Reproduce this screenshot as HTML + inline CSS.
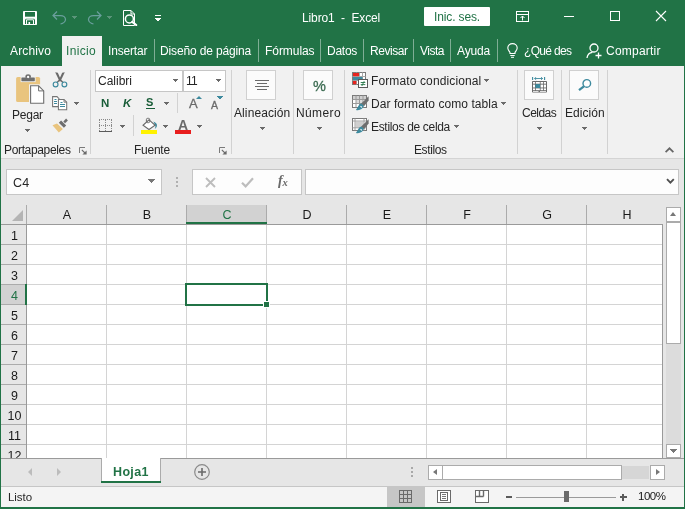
<!DOCTYPE html>
<html><head><meta charset="utf-8">
<style>
*{box-sizing:border-box;margin:0;padding:0}
html,body{width:685px;height:509px;overflow:hidden;background:#e6e6e6}
body{position:relative;font-family:"Liberation Sans",sans-serif;font-size:12px;color:#262626}
.a{position:absolute}
.t{position:absolute;white-space:nowrap;line-height:16px;will-change:transform}
.sep{position:absolute;width:1px;background:#d2d2d2;top:70px;height:84px}
.tsep{position:absolute;width:1px;background:#7fae95;top:39px;height:23px}
.arr{position:absolute;width:0;height:0;border-left:3px solid transparent;border-right:3px solid transparent;border-top:3px solid #6a6a6a}
.btn{position:absolute;width:30px;height:30px;background:#fbfbfb;border:1px solid #d0d0d0}
.gl{position:absolute;background:#d4d4d4}
</style></head><body>
<div class="a" style="left:0;top:0;width:685px;height:66px;background:#217346"></div>
<div class="a" style="left:1px;top:66px;width:683px;height:92px;background:#f1f1f1"></div>
<div class="a" style="left:1px;top:158px;width:683px;height:1px;background:#d4d4d4"></div>
<div class="a" style="left:62px;top:36px;width:40px;height:31px;background:#f1f1f1"></div>
<svg class="a" style="left:23px;top:11px" width="14" height="14" viewBox="0 0 14 14"><rect x="0" y="0" width="14" height="14" rx="0.8" fill="#fff"/><rect x="2" y="1" width="10" height="4.7" fill="#217346"/><path d="M2 8.7L2.8 7.7H11.2L12 8.7V13H2Z" fill="#217346"/><path d="M3.5 13V8.8H10.5V13" fill="none" stroke="#fff"/><rect x="5.5" y="11" width="1.6" height="2" fill="#fff"/></svg>
<svg class="a" style="left:52px;top:11px" width="15" height="14" viewBox="0 0 15 14"><path d="M5 0.5L1 4.5L5 8.5M1 4.5H8.5C11.5 4.5 13.5 6.5 13.5 8.5C13.5 10.5 11 12.5 8.5 13" fill="none" stroke="#6a9f9c" stroke-width="1.25"/></svg>
<svg class="a" style="left:87px;top:11px" width="15" height="14" viewBox="0 0 15 14"><path d="M10 0.5L14 4.5L10 8.5M14 4.5H6.5C3.5 4.5 1.5 6.5 1.5 8.5C1.5 10.5 4 12.5 6.5 13" fill="none" stroke="#6a9f9c" stroke-width="1.25"/></svg>
<svg class="a" style="left:122px;top:10px" width="16" height="16" viewBox="0 0 16 16"><path d="M1.5 0.5H9L12.5 4V15.5H1.5Z" fill="none" stroke="#fff"/><path d="M9 0.5V4H12.5" fill="none" stroke="#fff"/><circle cx="7.4" cy="8.9" r="4" fill="#217346" stroke="#fff" stroke-width="1.5"/><path d="M10.3 11.8L14.2 15" stroke="#fff" stroke-width="2.2" stroke-linecap="round"/></svg>
<div class="a" style="left:155px;top:15px;width:6px;height:1px;background:#fff"></div>
<div class="a" style="left:72px;top:16px;width:5px;height:1px;background:#5b957a"></div><div class="a" style="left:73px;top:17px;width:3px;height:1px;background:#5b957a"></div><div class="a" style="left:74px;top:18px;width:1px;height:1px;background:#5b957a"></div>
<div class="a" style="left:107px;top:16px;width:5px;height:1px;background:#5b957a"></div><div class="a" style="left:108px;top:17px;width:3px;height:1px;background:#5b957a"></div><div class="a" style="left:109px;top:18px;width:1px;height:1px;background:#5b957a"></div>
<div class="a" style="left:155px;top:18px;width:6px;height:1px;background:#fff"></div><div class="a" style="left:156px;top:19px;width:4px;height:1px;background:#fff"></div><div class="a" style="left:157px;top:20px;width:2px;height:1px;background:#fff"></div>
<div class="t" style="left:302.02px;top:10.24px;font-size:12px;letter-spacing:-0.118px;color:#ffffff;">Libro1&nbsp; -&nbsp; Excel</div>
<div class="a" style="left:424px;top:7px;width:66px;height:19px;background:#fff;border-radius:1px"></div>
<div class="t" style="left:433.91px;top:8.84px;font-size:12px;letter-spacing:-0.130px;color:#217346;">Inic. ses.</div>
<svg class="a" style="left:516px;top:11px" width="13" height="11" viewBox="0 0 13 11"><rect x="0.5" y="0.5" width="12" height="10" fill="none" stroke="#fff"/><path d="M0.5 3.5H12.5" stroke="#fff"/><path d="M6.5 9.5V5M4.5 7L6.5 5L8.5 7" fill="none" stroke="#fff"/></svg>
<div class="a" style="left:564px;top:16px;width:10px;height:1px;background:#fff"></div>
<div class="a" style="left:610px;top:11px;width:10px;height:10px;border:1px solid #fff"></div>
<svg class="a" style="left:655px;top:10px" width="12" height="12" viewBox="0 0 12 12"><path d="M1 1L11 11M11 1L1 11" stroke="#fff" stroke-width="1.1"/></svg>

<div class="t" style="left:9.98px;top:42.64px;font-size:12px;letter-spacing:0.133px;color:#ffffff;">Archivo</div>
<div class="t" style="left:66.21px;top:42.64px;font-size:12px;letter-spacing:0.356px;color:#217346;">Inicio</div>
<div class="t" style="left:108.41px;top:42.64px;font-size:12px;letter-spacing:-0.170px;color:#ffffff;">Insertar</div>
<div class="t" style="left:160.32px;top:42.64px;font-size:12px;letter-spacing:-0.149px;color:#ffffff;">Diseño de página</div>
<div class="t" style="left:264.52px;top:42.64px;font-size:12px;letter-spacing:-0.058px;color:#ffffff;">Fórmulas</div>
<div class="t" style="left:326.52px;top:42.64px;font-size:12px;letter-spacing:-0.259px;color:#ffffff;">Datos</div>
<div class="t" style="left:369.62px;top:42.64px;font-size:12px;letter-spacing:-0.433px;color:#ffffff;">Revisar</div>
<div class="t" style="left:419.95px;top:42.64px;font-size:12px;letter-spacing:-0.505px;color:#ffffff;">Vista</div>
<div class="t" style="left:456.98px;top:42.64px;font-size:12px;letter-spacing:-0.128px;color:#ffffff;">Ayuda</div>
<div class="t" style="left:524.23px;top:42.64px;font-size:12px;letter-spacing:-0.686px;color:#ffffff;">¿Qué des</div>
<div class="t" style="left:605.89px;top:42.64px;font-size:12px;letter-spacing:0.228px;color:#ffffff;">Compartir</div>
<div class="tsep" style="left:154px"></div>
<div class="tsep" style="left:258px"></div>
<div class="tsep" style="left:320px"></div>
<div class="tsep" style="left:363px"></div>
<div class="tsep" style="left:413px"></div>
<div class="tsep" style="left:450px"></div>
<div class="tsep" style="left:497px"></div>
<svg class="a" style="left:507px;top:43px" width="11" height="15" viewBox="0 0 11 15"><path d="M5.5 0.6C2.8 0.6 0.8 2.6 0.8 5C0.8 7 2.3 8 3 9.5V10.5H8V9.5C8.7 8 10.2 7 10.2 5C10.2 2.6 8.2 0.6 5.5 0.6Z" fill="none" stroke="#fff" stroke-width="1.1"/><path d="M3.3 12.5H7.7M4 14.3H7" stroke="#fff"/></svg>
<svg class="a" style="left:586px;top:43px" width="17" height="16" viewBox="0 0 17 16"><circle cx="8" cy="5" r="4" fill="none" stroke="#fff" stroke-width="1.3"/><path d="M1 15C1.5 11 4 9.5 6.5 9.3" fill="none" stroke="#fff" stroke-width="1.3"/><path d="M12.5 9.5V15.5M9.5 12.5H15.5" stroke="#fff" stroke-width="1.3"/></svg>

<div class="sep" style="left:90px"></div>
<div class="sep" style="left:231px"></div>
<div class="sep" style="left:293px"></div>
<div class="sep" style="left:344px"></div>
<div class="sep" style="left:517px"></div>
<div class="sep" style="left:561px"></div>
<div class="sep" style="left:607px"></div>
<svg class="a" style="left:16px;top:74px" width="29" height="31" viewBox="0 0 29 31">
<rect x="0.1" y="2.9" width="24" height="25.1" rx="1.6" fill="#e9c47e"/>
<rect x="4.6" y="2.9" width="15" height="5.2" fill="#f1f1f1"/>
<rect x="5.4" y="3.6" width="13.4" height="3.6" rx="0.4" fill="#6e6e6e"/>
<path d="M9.4 3.8V2.6C9.4 1.1 10.4 0.3 12.1 0.3C13.8 0.3 14.9 1.1 14.9 2.6V3.8Z" fill="#6e6e6e"/><circle cx="12.1" cy="3" r="1.15" fill="#fff"/>
<rect x="13" y="10.3" width="16" height="20.7" fill="#f1f1f1"/>
<path d="M14.6 11.8H22.6L27.7 16.9V29.3H14.6Z" fill="#fff" stroke="#6e6e6e" stroke-width="1.1"/><path d="M22.6 11.8V16.9H27.7" fill="none" stroke="#6e6e6e" stroke-width="1"/>
</svg>
<svg class="a" style="left:52px;top:72px" width="16" height="16" viewBox="0 0 16 16">
<path d="M3.2 0.3L5.8 0.8L9.3 8.6L7.6 9.4Z" fill="#6a6a6a"/><path d="M12.8 0.3L10.2 0.8L6.7 8.6L8.4 9.4Z" fill="#6a6a6a"/>
<path d="M7.6 8L5 10.6M8.4 8L11 10.6" stroke="#6a6a6a" stroke-width="1.4"/>
<circle cx="3.6" cy="12.4" r="2.4" fill="none" stroke="#3d8a9e" stroke-width="1.15"/><circle cx="12.4" cy="12.4" r="2.4" fill="none" stroke="#3d8a9e" stroke-width="1.15"/>
</svg>
<svg class="a" style="left:52px;top:96px" width="16" height="15" viewBox="0 0 16 15">
<path d="M0.6 0.6H5L7 2.6V10.6H0.6Z" fill="#fff" stroke="#757575" stroke-width="1.05"/>
<path d="M6.4 3.5H12L14.7 6.2V13.7H6.4Z" fill="#fff" stroke="#757575" stroke-width="1.05"/><path d="M12 3.5V6.2H14.7" fill="none" stroke="#757575" stroke-width="0.9"/>
<path d="M2.5 3.5H4.5M2 5.5H5M2 7.5H5M8.5 6.5H10.5M8 8.5H13M8 10.5H13" stroke="#3d8a9e" stroke-width="1" fill="none"/>
</svg>
<svg class="a" style="left:52px;top:118px" width="18" height="16" viewBox="0 0 18 16">
<path d="M0.5 7.3L5 5.6L10.9 11.1L6.8 14.6Z" fill="#e9c47e"/>
<path d="M14.2 7.5L11.9 9.8L6.8 4.7L9.1 2.4Z" fill="#6e6e6e"/>
<path d="M15.9 2.4L14.1 0.6L11.3 3.4L13.1 5.2Z" fill="#6e6e6e"/>
</svg>
<div class="t" style="left:12.42px;top:106.84px;font-size:12px;letter-spacing:-0.236px;color:#262626;">Pegar</div>
<div class="a" style="left:25px;top:129px;width:5px;height:1px;background:#6a6a6a"></div><div class="a" style="left:26px;top:130px;width:3px;height:1px;background:#6a6a6a"></div><div class="a" style="left:27px;top:131px;width:1px;height:1px;background:#6a6a6a"></div>
<div class="a" style="left:74px;top:102px;width:5px;height:1px;background:#6a6a6a"></div><div class="a" style="left:75px;top:103px;width:3px;height:1px;background:#6a6a6a"></div><div class="a" style="left:76px;top:104px;width:1px;height:1px;background:#6a6a6a"></div>
<div class="t" style="left:3.72px;top:141.84px;font-size:12px;letter-spacing:-0.347px;color:#262626;">Portapapeles</div>
<svg class="a" style="left:79px;top:147px" width="8" height="8" viewBox="0 0 8 8"><path d="M0.5 6V0.5H6" fill="none" stroke="#7a7a7a"/><path d="M2.8 2.8L6 6" stroke="#6a6a6a" stroke-width="1.1"/><path d="M7.6 3.4V7.6H3.4Z" fill="#6a6a6a"/></svg>
<div class="a" style="left:95px;top:70px;width:88px;height:22px;background:#fff;border:1px solid #c6c6c6"></div>
<div class="a" style="left:183px;top:70px;width:43px;height:22px;background:#fff;border:1px solid #c6c6c6"></div>
<div class="t" style="left:98.19px;top:72.84px;font-size:12px;letter-spacing:0.001px;color:#262626;">Calibri</div>
<div class="t" style="left:185.69px;top:72.84px;font-size:12px;letter-spacing:-0.669px;color:#262626;">11</div>
<div class="a" style="left:173px;top:79px;width:5px;height:1px;background:#6a6a6a"></div><div class="a" style="left:174px;top:80px;width:3px;height:1px;background:#6a6a6a"></div><div class="a" style="left:175px;top:81px;width:1px;height:1px;background:#6a6a6a"></div>
<div class="a" style="left:216px;top:79px;width:5px;height:1px;background:#6a6a6a"></div><div class="a" style="left:217px;top:80px;width:3px;height:1px;background:#6a6a6a"></div><div class="a" style="left:218px;top:81px;width:1px;height:1px;background:#6a6a6a"></div>
<div class="t" style="left:101.23px;top:94.82px;font-size:11.5px;letter-spacing:1.334px;color:#185c37;font-weight:bold;">N</div>
<div class="t" style="left:123.11px;top:94.82px;font-size:11.5px;letter-spacing:-0.513px;color:#185c37;font-weight:bold;font-style:italic;">K</div>
<div class="t" style="left:146.49px;top:94.49px;font-size:11px;letter-spacing:0.491px;color:#185c37;font-weight:bold;">S</div>
<div class="a" style="left:146px;top:108px;width:9px;height:1px;background:#185c37"></div>
<div class="a" style="left:164px;top:102px;width:5px;height:1px;background:#6a6a6a"></div><div class="a" style="left:165px;top:103px;width:3px;height:1px;background:#6a6a6a"></div><div class="a" style="left:166px;top:104px;width:1px;height:1px;background:#6a6a6a"></div>
<div class="a" style="left:177px;top:93px;width:1px;height:20px;background:#d2d2d2"></div>
<div class="t" style="left:188.78px;top:96.10px;font-size:13px;letter-spacing:0.259px;color:#6a6a6a;-webkit-text-stroke:0.3px #6a6a6a;">A</div>
<div class="a" style="left:195.5px;top:96px;width:0;height:0;border-left:3px solid transparent;border-right:3px solid transparent;border-bottom:3.5px solid #3d8a9e"></div>
<div class="t" style="left:211.38px;top:96.96px;font-size:10.5px;letter-spacing:0.431px;color:#6a6a6a;-webkit-text-stroke:0.3px #6a6a6a;">A</div>
<div class="a" style="left:217px;top:96px;width:6px;height:1px;background:#3d8a9e"></div><div class="a" style="left:218px;top:97px;width:4px;height:1px;background:#3d8a9e"></div><div class="a" style="left:219px;top:98px;width:2px;height:1px;background:#3d8a9e"></div>
<div class="a" style="left:99px;top:119px;width:13px;height:12px;background:
repeating-linear-gradient(90deg,#8a8a8a 0 1px,transparent 1px 2px) 0 0/13px 1px no-repeat,
repeating-linear-gradient(90deg,#8a8a8a 0 1px,transparent 1px 2px) 0 6px/13px 1px no-repeat,
repeating-linear-gradient(0deg,#8a8a8a 0 1px,transparent 1px 2px) 0 0/1px 12px no-repeat,
repeating-linear-gradient(0deg,#8a8a8a 0 1px,transparent 1px 2px) 6px 0/1px 12px no-repeat,
repeating-linear-gradient(0deg,#8a8a8a 0 1px,transparent 1px 2px) 12px 0/1px 12px no-repeat"></div><div class="a" style="left:99px;top:131px;width:13px;height:1px;background:#5a5a5a"></div>
<div class="a" style="left:120px;top:125px;width:5px;height:1px;background:#6a6a6a"></div><div class="a" style="left:121px;top:126px;width:3px;height:1px;background:#6a6a6a"></div><div class="a" style="left:122px;top:127px;width:1px;height:1px;background:#6a6a6a"></div>
<div class="a" style="left:133px;top:115px;width:1px;height:21px;background:#d2d2d2"></div>
<svg class="a" style="left:141px;top:117px" width="17" height="17" viewBox="0 0 17 17">
<path d="M12.4 4.6Q16.6 6.4 15.9 9.2Q15.4 11 13.8 12Q14.9 9.8 14.2 8.3Z" fill="#3d8a9e"/>
<path d="M8.1 2.8L14.1 8.3L8 12.5L2 8.3Z" fill="#fff" stroke="#6a6a6a" stroke-width="1.05"/><rect x="5.4" y="1.3" width="3.3" height="4.4" rx="1.3" fill="none" stroke="#6a6a6a" stroke-width="1"/>
<rect x="0" y="13" width="16" height="4" fill="#fff200"/></svg>
<div class="a" style="left:163px;top:125px;width:5px;height:1px;background:#6a6a6a"></div><div class="a" style="left:164px;top:126px;width:3px;height:1px;background:#6a6a6a"></div><div class="a" style="left:165px;top:127px;width:1px;height:1px;background:#6a6a6a"></div>
<div class="t" style="left:178.26px;top:117.45px;font-size:14px;letter-spacing:-0.006px;color:#6a6a6a;font-weight:bold;">A</div>
<div class="a" style="left:175px;top:130px;width:16px;height:4px;background:#e81e1e"></div>
<div class="a" style="left:197px;top:125px;width:5px;height:1px;background:#6a6a6a"></div><div class="a" style="left:198px;top:126px;width:3px;height:1px;background:#6a6a6a"></div><div class="a" style="left:199px;top:127px;width:1px;height:1px;background:#6a6a6a"></div>
<div class="t" style="left:133.62px;top:141.84px;font-size:12px;letter-spacing:-0.249px;color:#262626;">Fuente</div>
<svg class="a" style="left:219px;top:147px" width="8" height="8" viewBox="0 0 8 8"><path d="M0.5 6V0.5H6" fill="none" stroke="#7a7a7a"/><path d="M2.8 2.8L6 6" stroke="#6a6a6a" stroke-width="1.1"/><path d="M7.6 3.4V7.6H3.4Z" fill="#6a6a6a"/></svg>
<div class="btn" style="left:246px;top:70px"></div>
<div class="a" style="left:255px;top:80px;width:14px;height:1px;background:#6a6a6a;box-shadow:0 6px 0 #6a6a6a"></div><div class="a" style="left:257px;top:83px;width:10px;height:1px;background:#6a6a6a;box-shadow:0 6px 0 #6a6a6a"></div>
<div class="t" style="left:233.98px;top:104.84px;font-size:12px;letter-spacing:0.101px;color:#262626;">Alineación</div>
<div class="a" style="left:260px;top:127px;width:5px;height:1px;background:#6a6a6a"></div><div class="a" style="left:261px;top:128px;width:3px;height:1px;background:#6a6a6a"></div><div class="a" style="left:262px;top:129px;width:1px;height:1px;background:#6a6a6a"></div>
<div class="btn" style="left:303px;top:70px"></div>
<div class="t" style="left:313.18px;top:77.98px;font-size:14.5px;letter-spacing:0.225px;color:#3a6a50;-webkit-text-stroke:0.3px #3a6a50;">%</div>
<div class="t" style="left:296.42px;top:104.84px;font-size:12px;letter-spacing:0.383px;color:#262626;">Número</div>
<div class="a" style="left:317px;top:127px;width:5px;height:1px;background:#6a6a6a"></div><div class="a" style="left:318px;top:128px;width:3px;height:1px;background:#6a6a6a"></div><div class="a" style="left:319px;top:129px;width:1px;height:1px;background:#6a6a6a"></div>
<svg class="a" style="left:352px;top:72px" width="16" height="16" viewBox="0 0 16 16">
<rect x="0.5" y="0.5" width="13" height="12" fill="#fff" stroke="#7a7a7a"/><path d="M0.5 4.5H13.5M0.5 8.5H13.5M4.5 0.5V12.5M7.5 0.5V4.5M10.5 0.5V8" stroke="#a8a8a8"/>
<rect x="1" y="1" width="6" height="3.2" fill="#e8231e"/><rect x="1" y="5" width="9.5" height="3.2" fill="#3d8a9e"/><rect x="1" y="9" width="3.3" height="3.2" fill="#e8231e"/>
<rect x="6.5" y="7.5" width="9" height="8" fill="#fff" stroke="#5a5a5a"/><path d="M8.7 10.5H13.3M8.7 12.6H13.3M12.2 9.2L9.8 14" stroke="#2c7a4e" stroke-width="0.95"/></svg>
<svg class="a" style="left:352px;top:95px" width="17" height="17" viewBox="0 0 17 17">
<rect x="0.5" y="0.5" width="14" height="12" fill="#fff" stroke="#7a7a7a"/><rect x="1" y="1" width="13" height="3.4" fill="#cfcfcf"/><rect x="4" y="4.8" width="7" height="3.6" fill="#dcdcdc"/><path d="M0.5 4.5H14.5M0.5 8.5H14.5M4 0.5V12.5M7.5 0.5V12.5M11 0.5V12.5" stroke="#9a9a9a"/>
<path d="M16.6 1.2L16.6 5.6L12 11.2L9 8.8Z" fill="#6e6e6e"/><path d="M9.2 8.6C6.6 9.3 6.3 12 3.9 14.9C7.2 15.9 10.8 14.4 11.8 10.8Z" fill="#3d8a9e"/><path d="M8.5 11.3L10 12.4" stroke="#fff" stroke-width="1.1"/></svg>
<svg class="a" style="left:352px;top:118px" width="17" height="17" viewBox="0 0 17 17">
<rect x="0.5" y="0.5" width="14" height="12" fill="#fff" stroke="#7a7a7a"/><rect x="3.5" y="3.5" width="8" height="6" fill="#cfcfcf"/><path d="M0.5 3H14.5M0.5 9.8H14.5M3 0.5V12.5M12 0.5V12.5" stroke="#9a9a9a" stroke-width="0.9"/>
<path d="M16.6 1.2L16.6 5.6L12 11.2L9 8.8Z" fill="#6e6e6e"/><path d="M9.2 8.6C6.6 9.3 6.3 12 3.9 14.9C7.2 15.9 10.8 14.4 11.8 10.8Z" fill="#3d8a9e"/><path d="M8.5 11.3L10 12.4" stroke="#fff" stroke-width="1.1"/></svg>
<div class="t" style="left:370.72px;top:72.84px;font-size:12px;letter-spacing:0.123px;color:#262626;">Formato condicional</div>
<div class="a" style="left:484px;top:79px;width:5px;height:1px;background:#6a6a6a"></div><div class="a" style="left:485px;top:80px;width:3px;height:1px;background:#6a6a6a"></div><div class="a" style="left:486px;top:81px;width:1px;height:1px;background:#6a6a6a"></div>
<div class="t" style="left:370.72px;top:96.04px;font-size:12px;letter-spacing:0.061px;color:#262626;">Dar formato como tabla</div>
<div class="a" style="left:501px;top:102px;width:5px;height:1px;background:#6a6a6a"></div><div class="a" style="left:502px;top:103px;width:3px;height:1px;background:#6a6a6a"></div><div class="a" style="left:503px;top:104px;width:1px;height:1px;background:#6a6a6a"></div>
<div class="t" style="left:370.72px;top:119.24px;font-size:12px;letter-spacing:-0.319px;color:#262626;">Estilos de celda</div>
<div class="a" style="left:454px;top:125px;width:5px;height:1px;background:#6a6a6a"></div><div class="a" style="left:455px;top:126px;width:3px;height:1px;background:#6a6a6a"></div><div class="a" style="left:456px;top:127px;width:1px;height:1px;background:#6a6a6a"></div>
<div class="t" style="left:413.72px;top:141.84px;font-size:12px;letter-spacing:-0.390px;color:#262626;">Estilos</div>
<div class="btn" style="left:524px;top:70px"></div>
<svg class="a" style="left:532px;top:77px" width="15" height="16" viewBox="0 0 15 16">
<path d="M0.6 0V3M12.6 0V3" stroke="#3d8a9e" stroke-width="1.1"/><path d="M2.6 1.5H10.6M4.2 0.2L2.6 1.5L4.2 2.8M9 0.2L10.6 1.5L9 2.8" stroke="#3d8a9e" fill="none" stroke-width="0.9"/>
<rect x="0" y="4" width="15" height="11.6" rx="0.8" fill="#6a6a6a"/>
<g fill="#fff"><rect x="1" y="5" width="2" height="1.7"/><rect x="3.8" y="5" width="4" height="1.7"/><rect x="8.6" y="5" width="2.6" height="1.7"/><rect x="12" y="5" width="2" height="1.7"/>
<rect x="1" y="7.6" width="2" height="2.9"/><rect x="8.6" y="7.6" width="2.6" height="2.9"/><rect x="12" y="7.6" width="2" height="2.9"/>
<rect x="1" y="11.4" width="2" height="1.8"/><rect x="3.8" y="11.4" width="4" height="1.8"/><rect x="8.6" y="11.4" width="2.6" height="1.8"/><rect x="12" y="11.4" width="2" height="1.8"/>
<rect x="1" y="14.1" width="5.5" height="0.8"/><rect x="8" y="14.1" width="6" height="0.8"/></g>
<rect x="3.4" y="7.1" width="4.7" height="3.9" fill="#3d8a9e"/></svg>
<div class="t" style="left:522.19px;top:104.84px;font-size:12px;letter-spacing:-0.526px;color:#262626;">Celdas</div>
<div class="a" style="left:537px;top:127px;width:5px;height:1px;background:#6a6a6a"></div><div class="a" style="left:538px;top:128px;width:3px;height:1px;background:#6a6a6a"></div><div class="a" style="left:539px;top:129px;width:1px;height:1px;background:#6a6a6a"></div>
<div class="btn" style="left:569px;top:70px"></div>
<svg class="a" style="left:577px;top:78px" width="15" height="15" viewBox="0 0 15 15"><circle cx="9.8" cy="5.4" r="3.8" fill="#fff" stroke="#3d8a9e" stroke-width="1.4"/><path d="M6.9 8.3L2 12.2" stroke="#3d8a9e" stroke-width="2.2" stroke-linecap="butt"/></svg>
<div class="t" style="left:564.72px;top:104.84px;font-size:12px;letter-spacing:0.032px;color:#262626;">Edición</div>
<div class="a" style="left:582px;top:127px;width:5px;height:1px;background:#6a6a6a"></div><div class="a" style="left:583px;top:128px;width:3px;height:1px;background:#6a6a6a"></div><div class="a" style="left:584px;top:129px;width:1px;height:1px;background:#6a6a6a"></div>
<svg class="a" style="left:664px;top:146px" width="11" height="8" viewBox="0 0 11 8"><path d="M1.6 6.2L5.5 2.3L9.4 6.2" fill="none" stroke="#666" stroke-width="1.7"/></svg>

<div class="a" style="left:6px;top:169px;width:156px;height:26px;background:#fdfdfd;border:1px solid #c6c6c6"></div>
<div class="t" style="left:12.68px;top:174.67px;font-size:12.5px;letter-spacing:0.100px;color:#262626;">C4</div>
<div class="a" style="left:148px;top:179px;width:7px;height:1px;background:#777"></div><div class="a" style="left:149px;top:180px;width:5px;height:1px;background:#777"></div><div class="a" style="left:150px;top:181px;width:3px;height:1px;background:#777"></div><div class="a" style="left:151px;top:182px;width:1px;height:1px;background:#777"></div>
<div class="a" style="left:176px;top:177px;width:2px;height:2px;background:#b0b0b0;box-shadow:0 4px 0 #b0b0b0,0 8px 0 #b0b0b0"></div>
<div class="a" style="left:192px;top:169px;width:110px;height:26px;background:#fdfdfd;border:1px solid #c6c6c6"></div>
<svg class="a" style="left:205px;top:177px" width="11" height="11" viewBox="0 0 11 11"><path d="M1 1L10 10M10 1L1 10" stroke="#bdbdbd" stroke-width="1.9"/></svg>
<svg class="a" style="left:241px;top:177px" width="13" height="11" viewBox="0 0 13 11"><path d="M1 5.8L4.6 9.4L12 1.2" stroke="#bdbdbd" stroke-width="2.2" fill="none"/></svg>
<div class="t" style="left:277.5px;top:173px;font-family:'Liberation Serif',serif;font-style:italic;font-weight:bold;font-size:14px;color:#6a6a6a;letter-spacing:-0.3px">f<span style="font-size:10.5px;position:relative;top:1px">x</span></div>
<div class="a" style="left:305px;top:169px;width:374px;height:26px;background:#fdfdfd;border:1px solid #c6c6c6"></div>
<svg class="a" style="left:666px;top:178px" width="9" height="7" viewBox="0 0 9 7"><path d="M1 1.2L4.4 4.6L7.8 1.2" fill="none" stroke="#505050" stroke-width="1.9"/></svg>

<div class="a" style="left:27px;top:225px;width:635px;height:233px;background:#fff"></div>
<div class="a" style="left:187px;top:205px;width:80px;height:19px;background:#d2d2d2"></div>
<div class="a" style="left:1px;top:285px;width:25px;height:19px;background:#d2d2d2"></div>
<div class="a" style="left:26px;top:205px;width:1px;height:19px;background:#ababab"></div>
<div class="a" style="left:106px;top:205px;width:1px;height:19px;background:#ababab"></div>
<div class="a" style="left:186px;top:205px;width:1px;height:19px;background:#ababab"></div>
<div class="a" style="left:266px;top:205px;width:1px;height:19px;background:#ababab"></div>
<div class="a" style="left:346px;top:205px;width:1px;height:19px;background:#ababab"></div>
<div class="a" style="left:426px;top:205px;width:1px;height:19px;background:#ababab"></div>
<div class="a" style="left:506px;top:205px;width:1px;height:19px;background:#ababab"></div>
<div class="a" style="left:586px;top:205px;width:1px;height:19px;background:#ababab"></div>
<div class="gl" style="left:106px;top:225px;width:1px;height:233px"></div>
<div class="gl" style="left:186px;top:225px;width:1px;height:233px"></div>
<div class="gl" style="left:266px;top:225px;width:1px;height:233px"></div>
<div class="gl" style="left:346px;top:225px;width:1px;height:233px"></div>
<div class="gl" style="left:426px;top:225px;width:1px;height:233px"></div>
<div class="gl" style="left:506px;top:225px;width:1px;height:233px"></div>
<div class="gl" style="left:586px;top:225px;width:1px;height:233px"></div>
<div class="gl" style="left:27px;top:244px;width:635px;height:1px"></div>
<div class="a" style="left:1px;top:244px;width:25px;height:1px;background:#ababab"></div>
<div class="gl" style="left:27px;top:264px;width:635px;height:1px"></div>
<div class="a" style="left:1px;top:264px;width:25px;height:1px;background:#ababab"></div>
<div class="gl" style="left:27px;top:284px;width:635px;height:1px"></div>
<div class="a" style="left:1px;top:284px;width:25px;height:1px;background:#ababab"></div>
<div class="gl" style="left:27px;top:304px;width:635px;height:1px"></div>
<div class="a" style="left:1px;top:304px;width:25px;height:1px;background:#ababab"></div>
<div class="gl" style="left:27px;top:324px;width:635px;height:1px"></div>
<div class="a" style="left:1px;top:324px;width:25px;height:1px;background:#ababab"></div>
<div class="gl" style="left:27px;top:344px;width:635px;height:1px"></div>
<div class="a" style="left:1px;top:344px;width:25px;height:1px;background:#ababab"></div>
<div class="gl" style="left:27px;top:364px;width:635px;height:1px"></div>
<div class="a" style="left:1px;top:364px;width:25px;height:1px;background:#ababab"></div>
<div class="gl" style="left:27px;top:384px;width:635px;height:1px"></div>
<div class="a" style="left:1px;top:384px;width:25px;height:1px;background:#ababab"></div>
<div class="gl" style="left:27px;top:404px;width:635px;height:1px"></div>
<div class="a" style="left:1px;top:404px;width:25px;height:1px;background:#ababab"></div>
<div class="gl" style="left:27px;top:424px;width:635px;height:1px"></div>
<div class="a" style="left:1px;top:424px;width:25px;height:1px;background:#ababab"></div>
<div class="gl" style="left:27px;top:444px;width:635px;height:1px"></div>
<div class="a" style="left:1px;top:444px;width:25px;height:1px;background:#ababab"></div>
<div class="a" style="left:1px;top:224px;width:662px;height:1px;background:#9a9a9a"></div>
<div class="a" style="left:26px;top:224px;width:1px;height:234px;background:#9a9a9a"></div>
<div class="a" style="left:662px;top:224px;width:1px;height:235px;background:#9a9a9a"></div>
<div class="a" style="left:12px;top:210px;width:0;height:0;border-left:11px solid transparent;border-bottom:11px solid #b4b4b4"></div>
<div class="t" style="left:46.5px;width:40px;text-align:center;top:206.5px;font-size:12.5px;color:#1a1a1a">A</div>
<div class="t" style="left:126.5px;width:40px;text-align:center;top:206.5px;font-size:12.5px;color:#1a1a1a">B</div>
<div class="t" style="left:206.5px;width:40px;text-align:center;top:206.5px;font-size:12.5px;color:#217346">C</div>
<div class="t" style="left:286.5px;width:40px;text-align:center;top:206.5px;font-size:12.5px;color:#1a1a1a">D</div>
<div class="t" style="left:366.5px;width:40px;text-align:center;top:206.5px;font-size:12.5px;color:#1a1a1a">E</div>
<div class="t" style="left:446.5px;width:40px;text-align:center;top:206.5px;font-size:12.5px;color:#1a1a1a">F</div>
<div class="t" style="left:526.5px;width:40px;text-align:center;top:206.5px;font-size:12.5px;color:#1a1a1a">G</div>
<div class="t" style="left:606.5px;width:40px;text-align:center;top:206.5px;font-size:12.5px;color:#1a1a1a">H</div>
<div class="a" style="left:1px;top:224px;width:25px;height:234px;overflow:hidden"><div class="t" style="left:0.6px;width:25px;text-align:center;top:3.5px;font-size:12.5px;color:#1a1a1a">1</div>
<div class="t" style="left:0.6px;width:25px;text-align:center;top:23.5px;font-size:12.5px;color:#1a1a1a">2</div>
<div class="t" style="left:0.6px;width:25px;text-align:center;top:43.5px;font-size:12.5px;color:#1a1a1a">3</div>
<div class="t" style="left:0.6px;width:25px;text-align:center;top:63.5px;font-size:12.5px;color:#217346">4</div>
<div class="t" style="left:0.6px;width:25px;text-align:center;top:83.5px;font-size:12.5px;color:#1a1a1a">5</div>
<div class="t" style="left:0.6px;width:25px;text-align:center;top:103.5px;font-size:12.5px;color:#1a1a1a">6</div>
<div class="t" style="left:0.6px;width:25px;text-align:center;top:123.5px;font-size:12.5px;color:#1a1a1a">7</div>
<div class="t" style="left:0.6px;width:25px;text-align:center;top:143.5px;font-size:12.5px;color:#1a1a1a">8</div>
<div class="t" style="left:0.6px;width:25px;text-align:center;top:163.5px;font-size:12.5px;color:#1a1a1a">9</div>
<div class="t" style="left:0.6px;width:25px;text-align:center;top:183.5px;font-size:12.5px;color:#1a1a1a">10</div>
<div class="t" style="left:0.6px;width:25px;text-align:center;top:203.5px;font-size:12.5px;color:#1a1a1a">11</div>
<div class="t" style="left:0.6px;width:25px;text-align:center;top:223.5px;font-size:12.5px;color:#1a1a1a">12</div>
</div>
<div class="a" style="left:186px;top:222px;width:81px;height:2px;background:#217346"></div>
<div class="a" style="left:25px;top:284px;width:2px;height:21px;background:#217346"></div>
<div class="a" style="left:185px;top:283px;width:83px;height:23px;border:2px solid #217346"></div>
<div class="a" style="left:263px;top:301px;width:7px;height:7px;background:#fff"></div>
<div class="a" style="left:264px;top:302px;width:5px;height:5px;background:#217346"></div>
<div class="a" style="left:666px;top:207px;width:15px;height:15px;background:#fff;border:1px solid #ababab"></div>
<div class="a" style="left:670px;top:212px;width:0;height:0;border-left:3.5px solid transparent;border-right:3.5px solid transparent;border-bottom:4px solid #777"></div>
<div class="a" style="left:666px;top:222px;width:15px;height:122px;background:#fff;border:1px solid #ababab"></div>
<div class="a" style="left:666px;top:344px;width:15px;height:100px;background:#dcdcdc"></div>
<div class="a" style="left:666px;top:444px;width:15px;height:14px;background:#fff;border:1px solid #ababab"></div>
<div class="a" style="left:670px;top:449px;width:7px;height:1px;background:#777"></div><div class="a" style="left:671px;top:450px;width:5px;height:1px;background:#777"></div><div class="a" style="left:672px;top:451px;width:3px;height:1px;background:#777"></div><div class="a" style="left:673px;top:452px;width:1px;height:1px;background:#777"></div>

<div class="a" style="left:1px;top:458px;width:683px;height:1px;background:#9a9a9a"></div>
<div class="a" style="left:28px;top:467.5px;width:0;height:0;border-top:4px solid transparent;border-bottom:4px solid transparent;border-right:4.6px solid #bcbcbc"></div>
<div class="a" style="left:56.6px;top:467.5px;width:0;height:0;border-top:4px solid transparent;border-bottom:4px solid transparent;border-left:4.6px solid #bcbcbc"></div>
<div class="a" style="left:101px;top:458px;width:60px;height:25px;background:#fff;border-left:1px solid #ababab;border-right:1px solid #ababab"></div>
<div class="a" style="left:101px;top:481px;width:60px;height:2px;background:#217346"></div>
<div class="t" style="left:112.67px;top:463.67px;font-size:12.5px;letter-spacing:0.356px;color:#217346;font-weight:bold;">Hoja1</div>
<svg class="a" style="left:193px;top:463px" width="18" height="18" viewBox="0 0 18 18"><circle cx="9" cy="9" r="7.3" fill="none" stroke="#8a8a8a" stroke-width="1.2"/><path d="M9 5V13M5 9H13" stroke="#6a6a6a" stroke-width="1.6"/></svg>
<div class="a" style="left:411px;top:467px;width:2px;height:2px;background:#a8a8a8;box-shadow:0 4px 0 #a8a8a8,0 8px 0 #a8a8a8"></div>
<div class="a" style="left:428px;top:465px;width:15px;height:15px;background:#fff;border:1px solid #ababab"></div>
<div class="a" style="left:433px;top:469px;width:0;height:0;border-top:3.5px solid transparent;border-bottom:3.5px solid transparent;border-right:4px solid #777"></div>
<div class="a" style="left:442px;top:465px;width:180px;height:15px;background:#fff;border:1px solid #ababab"></div>
<div class="a" style="left:622px;top:466px;width:27px;height:13px;background:#d6d6d6"></div>
<div class="a" style="left:650px;top:465px;width:15px;height:15px;background:#fff;border:1px solid #ababab"></div>
<div class="a" style="left:656px;top:469px;width:0;height:0;border-top:3.5px solid transparent;border-bottom:3.5px solid transparent;border-left:4px solid #777"></div>
<div class="a" style="left:1px;top:486px;width:683px;height:1px;background:#c6c6c6"></div>
<div class="a" style="left:1px;top:487px;width:683px;height:20px;background:#f4f4f4"></div>
<div class="t" style="left:7.56px;top:488.52px;font-size:11.5px;letter-spacing:-0.044px;color:#262626;">Listo</div>
<div class="a" style="left:387px;top:487px;width:38px;height:20px;background:#c6c6c6"></div>
<svg class="a" style="left:399px;top:490px" width="13" height="13" viewBox="0 0 13 13"><rect x="0.5" y="0.5" width="12" height="12" fill="none" stroke="#6a6a6a"/><path d="M0.5 4.5H12.5M0.5 8.5H12.5M4.5 0.5V12.5M8.5 0.5V12.5" stroke="#6a6a6a"/></svg>
<svg class="a" style="left:437px;top:490px" width="14" height="13" viewBox="0 0 14 13"><rect x="0.5" y="0.5" width="13" height="12" fill="#fff" stroke="#6a6a6a"/><rect x="3.5" y="2.5" width="7" height="8" fill="none" stroke="#6a6a6a"/><path d="M5 4.5H9M5 6.5H9M5 8.5H9" stroke="#6a6a6a" stroke-width="0.9"/></svg>
<svg class="a" style="left:475px;top:490px" width="14" height="13" viewBox="0 0 14 13"><rect x="0.5" y="0.5" width="13" height="12" fill="#fff" stroke="#6a6a6a"/><path d="M4.5 0.5V6.5M8.5 0.5V6.5M0.5 6.5H8.5" fill="none" stroke="#6a6a6a" stroke-width="1.4"/></svg>
<div class="a" style="left:506px;top:496px;width:6px;height:2px;background:#5a5a5a"></div>
<div class="a" style="left:516px;top:497px;width:100px;height:1px;background:#9a9a9a"></div>
<div class="a" style="left:564px;top:491px;width:5px;height:11px;background:#6a6a6a"></div>
<div class="a" style="left:619.5px;top:496.2px;width:7px;height:1.6px;background:#5a5a5a"></div><div class="a" style="left:622.2px;top:493.5px;width:1.6px;height:7px;background:#5a5a5a"></div>
<div class="t" style="left:637.73px;top:488.02px;font-size:11.5px;letter-spacing:-0.480px;color:#1a1a1a;">100%</div>

<div class="a" style="left:0;top:0;width:1px;height:509px;background:#217346"></div>
<div class="a" style="left:684px;top:0;width:1px;height:509px;background:#217346"></div>
<div class="a" style="left:0;top:507.4px;width:685px;height:1.6px;background:#217346"></div>
</body></html>
